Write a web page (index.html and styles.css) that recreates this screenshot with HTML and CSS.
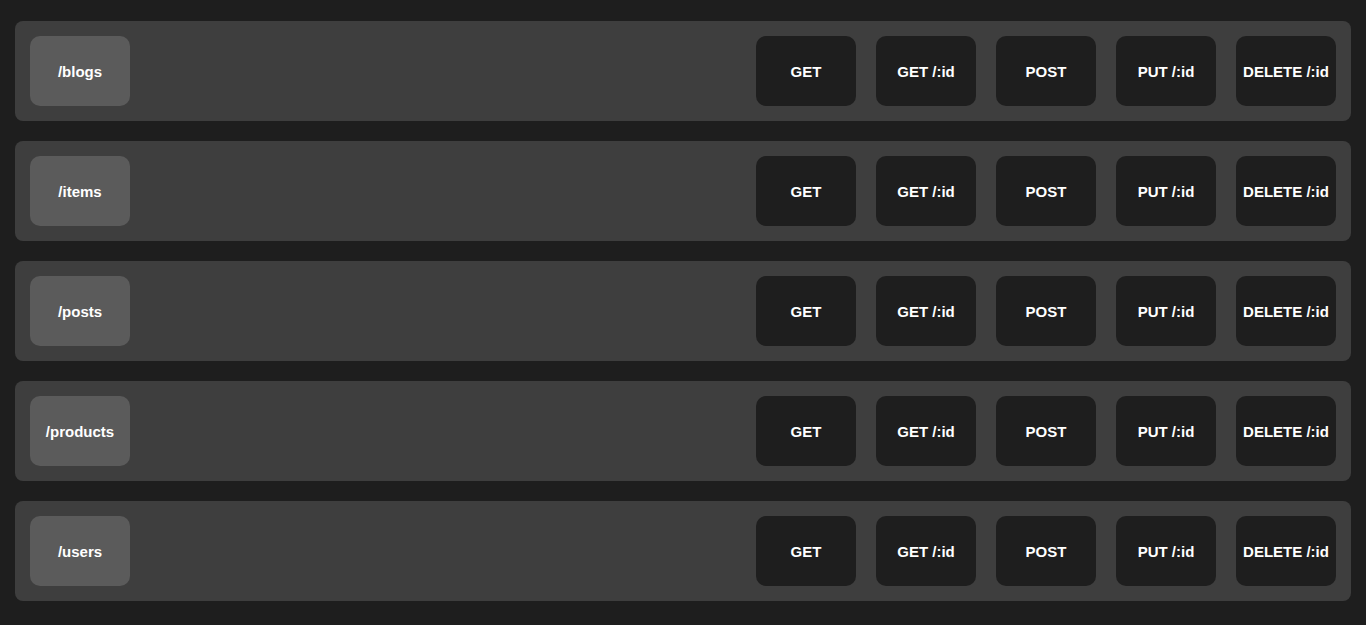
FILE: index.html
```html
<!DOCTYPE html>
<html>
<head>
<meta charset="utf-8">
<link rel="stylesheet" href="styles.css">
</head>
<body>
<div class="list">
  <div class="row">
    <div class="route">/blogs</div>
    <div class="methods">
      <div class="method">GET</div><div class="method">GET /:id</div><div class="method">POST</div><div class="method">PUT /:id</div><div class="method">DELETE /:id</div>
    </div>
  </div>
  <div class="row">
    <div class="route">/items</div>
    <div class="methods">
      <div class="method">GET</div><div class="method">GET /:id</div><div class="method">POST</div><div class="method">PUT /:id</div><div class="method">DELETE /:id</div>
    </div>
  </div>
  <div class="row">
    <div class="route">/posts</div>
    <div class="methods">
      <div class="method">GET</div><div class="method">GET /:id</div><div class="method">POST</div><div class="method">PUT /:id</div><div class="method">DELETE /:id</div>
    </div>
  </div>
  <div class="row">
    <div class="route">/products</div>
    <div class="methods">
      <div class="method">GET</div><div class="method">GET /:id</div><div class="method">POST</div><div class="method">PUT /:id</div><div class="method">DELETE /:id</div>
    </div>
  </div>
  <div class="row">
    <div class="route">/users</div>
    <div class="methods">
      <div class="method">GET</div><div class="method">GET /:id</div><div class="method">POST</div><div class="method">PUT /:id</div><div class="method">DELETE /:id</div>
    </div>
  </div>
</div>
</body>
</html>
```
FILE: styles.css
```css
html, body {
  margin: 0;
  background: #1e1e1e;
}
body {
  padding: 21px 15px;
  font-family: "Liberation Sans", Arial, sans-serif;
  font-weight: bold;
  font-size: 15px;
  color: #ffffff;
}
.list {
  display: flex;
  flex-direction: column;
  gap: 20px;
}
.row {
  display: flex;
  justify-content: space-between;
  align-items: center;
  height: 100px;
  box-sizing: border-box;
  padding: 15px;
  background: #3e3e3e;
  border-radius: 8px;
}
.route, .method {
  width: 100px;
  height: 70px;
  display: flex;
  align-items: center;
  justify-content: center;
  border-radius: 10px;
  white-space: nowrap;
}
.route {
  background: #5b5b5b;
}
.methods {
  display: flex;
  gap: 20px;
}
.method {
  background: #1e1e1e;
}
```
